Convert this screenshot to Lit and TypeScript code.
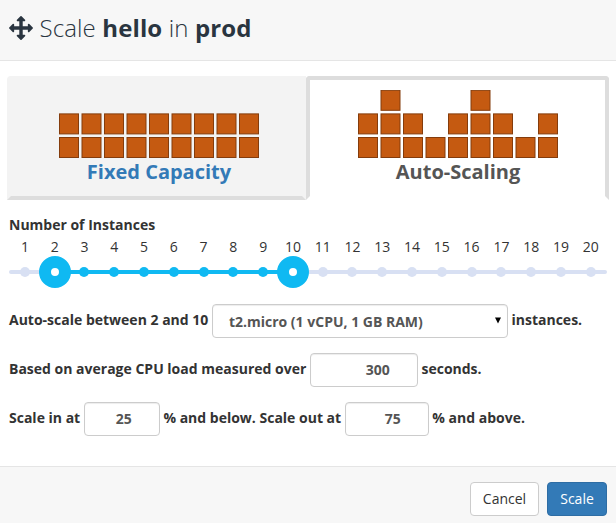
import { LitElement, html, svg, css } from "lit";
import { customElement, property, state } from "lit/decorators.js";
import { classMap } from "lit/directives/class-map.js";

@customElement("block-chart")
class BlockChart extends LitElement {
  @property({ attribute: false }) columns: number[] = [];

  static styles = css`
    :host { display: block; width: 200px; height: 68px; }
    svg { display: block; }
    .tile { fill: #c55a11; stroke: #843c0c; stroke-width: 1; }
  `;

  render() {
    return html`<svg width="200" height="68" viewBox="0 0 200 68">
      ${this.columns.map((n, c) =>
        Array.from({ length: n }, (_, r) => svg`<rect class="tile"
          x=${c * 22.5 + 0.5} y=${47.5 - r * 23.6} width="19" height="20"></rect>`)
      )}
    </svg>`;
  }
}

@customElement("range-slider")
class RangeSlider extends LitElement {
  @property({ type: Number }) low = 2;
  @property({ type: Number }) high = 10;

  static styles = css`
    :host { display: block; width: 598px; }
    .steps { display: grid; grid-template-columns: repeat(20, 29.79px); padding-left: 1px; }
    .num { text-align: center; line-height: 20px; height: 19px; color: #333; }
    .rail { display: grid; grid-template-columns: 598px; height: 32px; align-items: center; }
    .rail > * { grid-area: 1 / 1; }
    .line { height: 4px; border-radius: 2px; background: #d8e0f3; }
    .range { height: 4px; background: #0fb9f2; }
    .stop { display: flex; justify-content: center; align-items: center; height: 32px; }
    .dot { flex: none; width: 10px; height: 10px; border-radius: 50%; background: #d8e0f3; }
    .dot.on { background: #0fb9f2; }
    .dot.handle { width: 8px; height: 8px; border: 12px solid #0fb9f2; background: #fff; }
  `;

  render() {
    const steps = Array.from({ length: 20 }, (_, i) => i + 1);
    const start = 16 + (this.low - 1) * 29.79;
    const width = (this.high - this.low) * 29.79;
    return html`
      <div class="steps">${steps.map((n) => html`<span class="num">${n}</span>`)}</div>
      <div class="rail">
        <div class="line"></div>
        <div class="range" style="margin-left:${start}px;width:${width}px"></div>
        <div class="steps">
          ${steps.map((n) => html`<span class="stop"><i class=${classMap({
            dot: true,
            on: n >= this.low && n <= this.high,
            handle: n === this.low || n === this.high,
          })}></i></span>`)}
        </div>
      </div>`;
  }
}

@customElement("app-root")
class AppRoot extends LitElement {
  @state() low = 2;
  @state() high = 10;

  static styles = css`
    :host {
      display: flex; flex-direction: column; box-sizing: border-box;
      width: 616px; height: 523px; overflow: hidden; background: #fff;
      font: 14px/20px "Open Sans", sans-serif; color: #333;
    }
    * { box-sizing: border-box; }
    header {
      display: flex; align-items: center; gap: 6.5px; height: 61px; flex: none;
      padding: 0 9px 4px; background: #f7f7f7; border-bottom: 1px solid #e5e5e5; color: #2a3540;
    }
    header svg { width: 24px; height: 24px; fill: #2a3540; }
    h1 { margin: 0; font-size: 24px; line-height: 32px; font-weight: 300; white-space: pre; letter-spacing: .12px; }
    h1 b { font-weight: 700; }
    main { flex: 1; padding: 15px 7px 0; }
    .tabs { display: flex; height: 124px; }
    .tab {
      display: flex; flex-direction: column; align-items: center;
      border: 4px solid transparent; border-radius: 4px;
      font-size: 20px; line-height: 28px; font-weight: 700;
    }
    .fixed {
      width: 299px; padding: 10px 0 0 5px; background: #f3f3f3; color: #337ab7;
      border-bottom-color: #ddd; border-radius: 4px 0 0 0;
    }
    .auto { width: 303px; padding: 10px 0 0 1px; border-color: #ddd #ddd transparent; color: #555; border-radius: 4px 4px 0 0; }
    .label { font-weight: 700; color: #333; white-space: nowrap; }
    .count { padding: 15px 2px 0; height: 37px; }
    range-slider { margin-left: 2px; }
    .form { display: flex; flex-direction: column; gap: 15px; padding: 16px 2px 0; }
    .row { display: flex; gap: 3.6px; height: 34px; }
    .row .label { padding-top: 6px; }
    .control {
      display: flex; align-items: center; justify-content: flex-end; height: 34px;
      border: 1px solid #ccc; border-radius: 4px; background: #fff; color: #555;
      box-shadow: inset 0 1px 1px rgba(0, 0, 0, .075); font-weight: 700;
      padding: 0 27px 0 0;
    }
    .select { width: 296px; justify-content: space-between; padding: 1px 6px 0 16px; }
    .select svg { width: 6px; height: 7px; margin-bottom: 3px; }
    .seconds { width: 108px; }
    .in { width: 76px; }
    .out { width: 84px; }
    footer {
      display: flex; justify-content: flex-end; gap: 8px; height: 57px; flex: none;
      padding: 15px 9px 0; background: #f7f7f7; border-top: 1px solid #e5e5e5;
    }
    button {
      height: 34px; border-radius: 4px; border: 1px solid #ccc; background: #fff; color: #333;
      font: 14px/20px "Open Sans", sans-serif; padding: 0;
    }
    .cancel { width: 69px; }
    .scale { width: 60px; background: #337ab7; border-color: #2e6da4; color: #fff; }
  `;

  render() {
    return html`
      <header>
        <svg viewBox="0 0 1792 1792"><path d="M1792 896q0 26-19 45l-256 256q-19 19-45 19t-45-19-19-45v-128h-384v384h128q26 0 45 19t19 45-19 45l-256 256q-19 19-45 19t-45-19l-256-256q-19-19-19-45t19-45 45-19h128v-384h-384v128q0 26-19 45t-45 19-45-19l-256-256q-19-19-19-45t19-45l256-256q19-19 45-19t45 19 19 45v128h384v-384h-128q-26 0-45-19t-19-45 19-45l256-256q19-19 45-19t45 19l256 256q19 19 19 45t-19 45-45 19h-128v384h384v-128q0-26 19-45t45-19 45 19l256 256q19 19 19 45z"/></svg>
        <h1>Scale <b>hello</b> in <b>prod</b></h1>
      </header>
      <main>
        <div class="tabs">
          <div class="tab fixed">
            <block-chart .columns=${[2, 2, 2, 2, 2, 2, 2, 2, 2]}></block-chart>
            <span>Fixed Capacity</span>
          </div>
          <div class="tab auto">
            <block-chart .columns=${[2, 3, 2, 1, 2, 3, 2, 1, 2]}></block-chart>
            <span>Auto-Scaling</span>
          </div>
        </div>
        <div class="label count">Number of Instances</div>
        <range-slider .low=${this.low} .high=${this.high}></range-slider>
        <div class="form">
          <div class="row">
            <span class="label">Auto-scale between ${this.low} and ${this.high}</span>
            <span class="control select">t2.micro (1 vCPU, 1 GB RAM)
              <svg viewBox="0 0 6 7"><path d="M0 0.5h6L3 6.5z"/></svg></span>
            <span class="label">instances.</span>
          </div>
          <div class="row">
            <span class="label">Based on average CPU load measured over</span>
            <span class="control seconds">300</span>
            <span class="label">seconds.</span>
          </div>
          <div class="row">
            <span class="label">Scale in at</span>
            <span class="control in">25</span>
            <span class="label">% and below. Scale out at</span>
            <span class="control out">75</span>
            <span class="label">% and above.</span>
          </div>
        </div>
      </main>
      <footer>
        <button class="cancel">Cancel</button>
        <button class="scale">Scale</button>
      </footer>`;
  }
}
